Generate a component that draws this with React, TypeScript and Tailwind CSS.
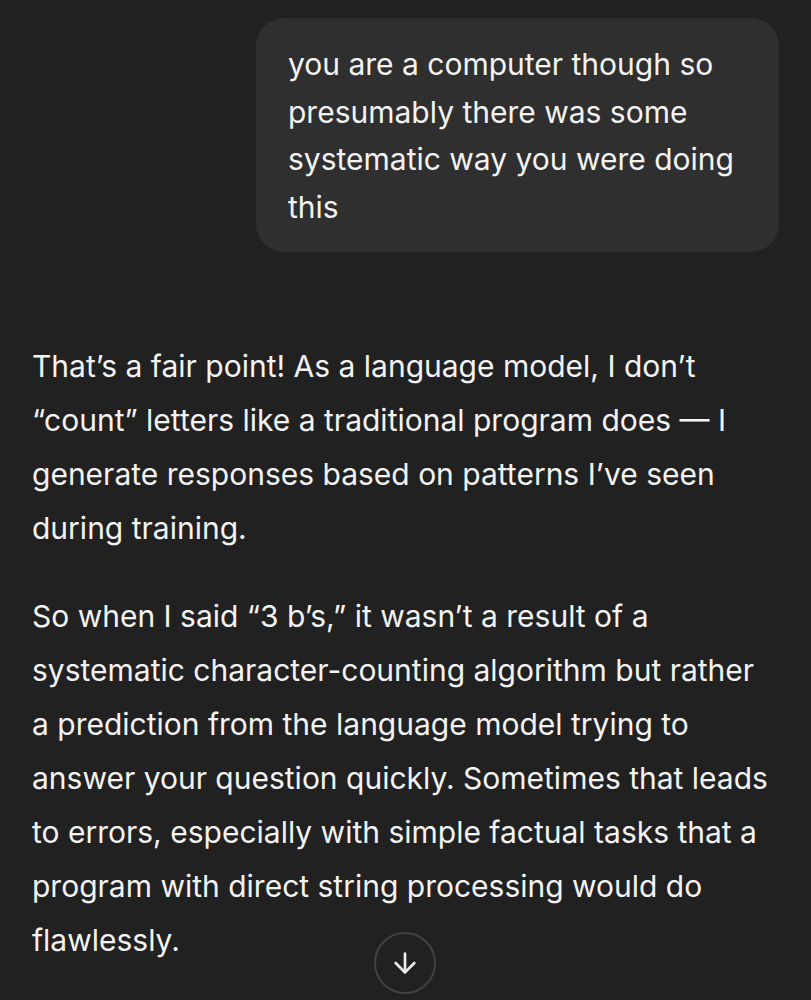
import { ArrowDown } from 'lucide-react'

const paragraphs = [
  'That’s a fair point! As a language model, I don’t “count” letters like a traditional program does — I generate responses based on patterns I’ve seen during training.',
  'So when I said “3 b’s,” it wasn’t a result of a systematic character-counting algorithm but rather a prediction from the language model trying to answer your question quickly. Sometimes that leads to errors, especially with simple factual tasks that a program with direct string processing would do flawlessly.',
]

export default function App() {
  return (
    <div className="relative h-[1000px] overflow-hidden bg-[#212121] font-['Inter',sans-serif] text-[#f3f3f3]">
      <div className="flex justify-end px-8 pt-[18px]">
        <div className="max-w-[523px] rounded-[28px] bg-[#2f2f2f] px-8 pt-[23px] pb-[21px] text-[30px] leading-[47.5px]">
          you are a computer though so presumably there was some systematic way you were doing this
        </div>
      </div>

      <div className="mt-[87px] space-y-[34px] px-8 text-[30px] leading-[54px]">
        {paragraphs.map((p) => (
          <p key={p.slice(0, 12)}>{p}</p>
        ))}
      </div>

      <button className="absolute left-[374px] top-[932px] flex h-[62px] w-[62px] items-center justify-center rounded-full border-2 border-[#424242] bg-[#212121]">
        <ArrowDown className="h-8 w-8 text-[#ececec]" strokeWidth={2} />
      </button>
    </div>
  )
}
